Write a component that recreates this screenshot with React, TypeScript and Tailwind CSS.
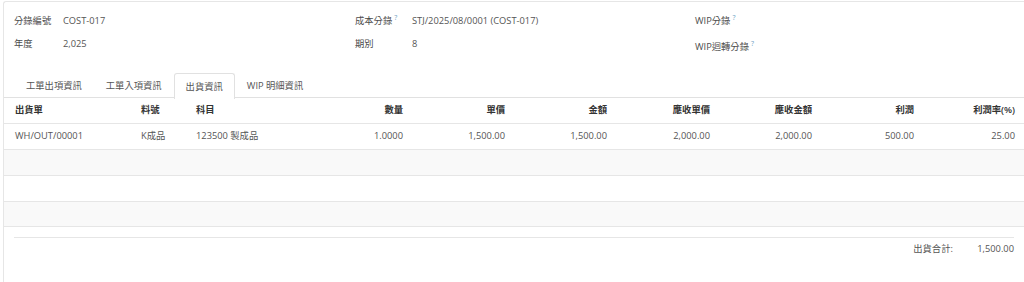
import React from "react";

type Field = { label: string; value?: string; help?: boolean };

const headers = [
  { label: "出貨單", align: "left" },
  { label: "料號", align: "left" },
  { label: "科目", align: "left" },
  { label: "數量", align: "right" },
  { label: "單價", align: "right" },
  { label: "金額", align: "right" },
  { label: "應收單價", align: "right" },
  { label: "應收金額", align: "right" },
  { label: "利潤", align: "right" },
  { label: "利潤率(%)", align: "right" },
];

const row = [
  "WH/OUT/00001",
  "K成品",
  "123500 製成品",
  "1.0000",
  "1,500.00",
  "1,500.00",
  "2,000.00",
  "2,000.00",
  "500.00",
  "25.00",
];

const tabs = ["工單出項資訊", "工單入項資訊", "出貨資訊", "WIP 明細資訊"];

const FieldRow: React.FC<{ field: Field; labelW: string; className?: string }> = ({
  field,
  labelW,
  className,
}) => (
  <div className={`flex items-center h-[23px] ${className ?? ""}`}>
    <div className={`${labelW} shrink-0 text-[#4c4c4c] whitespace-nowrap`}>
      {field.label}
      {field.help && <sup className="text-[7px] text-[#6f9fc4] ml-[2px]">?</sup>}
    </div>
    <div className="text-[#555]">{field.value}</div>
  </div>
);

const App: React.FC = () => {
  return (
    <div
      className="w-[1024px] h-[282px] bg-white overflow-hidden text-[9.3px]"
      style={{ fontFamily: '"Open Sans", "Noto Sans CJK TC", sans-serif' }}
    >
      <div className="ml-[3px] mt-[1px] h-[281px] border-l border-t border-[#e6e6e6] rounded-tl-[3px]">
        {/* Header fields */}
        <div className="grid grid-cols-[341px_340px_1fr] pl-[10px] pt-[7px]">
          <div>
            <FieldRow labelW="w-[49px]" field={{ label: "分錄編號", value: "COST-017" }} />
            <FieldRow labelW="w-[49px]" field={{ label: "年度", value: "2,025" }} />
          </div>
          <div>
            <FieldRow
              labelW="w-[57px]"
              field={{ label: "成本分錄", value: "STJ/2025/08/0001 (COST-017)", help: true }}
            />
            <FieldRow labelW="w-[57px]" field={{ label: "期別", value: "8" }} />
          </div>
          <div>
            <FieldRow labelW="w-[80px]" field={{ label: "WIP分錄", help: true }} />
            <FieldRow labelW="w-[80px]" field={{ label: "WIP迴轉分錄", help: true }} className="mt-[3px]" />
          </div>
        </div>

        {/* Tabs */}
        <div className="flex mt-[15px] pl-[10px] border-b border-[#e1e1e1] h-[25px]">
          {tabs.map((t, i) => (
            <div
              key={t}
              className={`px-[11px] flex items-center h-[25px] text-[#555] ${
                i === 2
                  ? "border border-b-0 border-[#e1e1e1] bg-white rounded-t-[3px] h-[26px] -mb-px"
                  : "border border-transparent"
              }`}
            >
              {t}
            </div>
          ))}
        </div>

        {/* Table */}
        <table className="table-fixed w-[1021px] border-collapse">
          <colgroup>
            <col className="w-[129px]" />
            <col className="w-[55px]" />
            <col className="w-[123px]" />
            <col className="w-[102px]" />
            <col className="w-[102px]" />
            <col className="w-[102px]" />
            <col className="w-[103px]" />
            <col className="w-[102px]" />
            <col className="w-[102px]" />
            <col className="w-[101px]" />
          </colgroup>
          <thead>
            <tr className="h-[25px] border-b border-[#e6e6e6]">
              {headers.map((h, i) => (
                <th
                  key={h.label}
                  className={`font-semibold text-[#333] whitespace-nowrap ${
                    h.align === "right" ? "text-right pr-[10px]" : "text-left"
                  } ${i === 0 ? "pl-[11px]" : "pl-[8px]"}`}
                >
                  {h.label}
                </th>
              ))}
            </tr>
          </thead>
          <tbody>
            <tr className="h-[26px] border-b border-[#e6e6e6]">
              {row.map((v, i) => (
                <td
                  key={i}
                  className={`text-[#555] whitespace-nowrap ${
                    headers[i].align === "right" ? "text-right pr-[10px]" : "text-left"
                  } ${i === 0 ? "pl-[11px]" : "pl-[8px]"}`}
                >
                  {v}
                </td>
              ))}
            </tr>
            <tr className="h-[26px] bg-[#f9f9f9] border-b border-[#e6e6e6]">
              <td colSpan={10} />
            </tr>
            <tr className="h-[26px] border-b border-[#e6e6e6]">
              <td colSpan={10} />
            </tr>
            <tr className="h-[25px] bg-[#f9f9f9] border-b border-[#e6e6e6]">
              <td colSpan={10} />
            </tr>
          </tbody>
        </table>

        {/* Footer total */}
        <div className="ml-[10px] mr-[10px] mt-[10px] border-t border-[#e6e6e6] flex justify-end items-center h-[22px] pt-[2px]">
          <span className="text-[#555] w-[64px]">出貨合計:</span>
          <span className="text-[#555]">1,500.00</span>
        </div>
      </div>
    </div>
  );
};

export default App;
